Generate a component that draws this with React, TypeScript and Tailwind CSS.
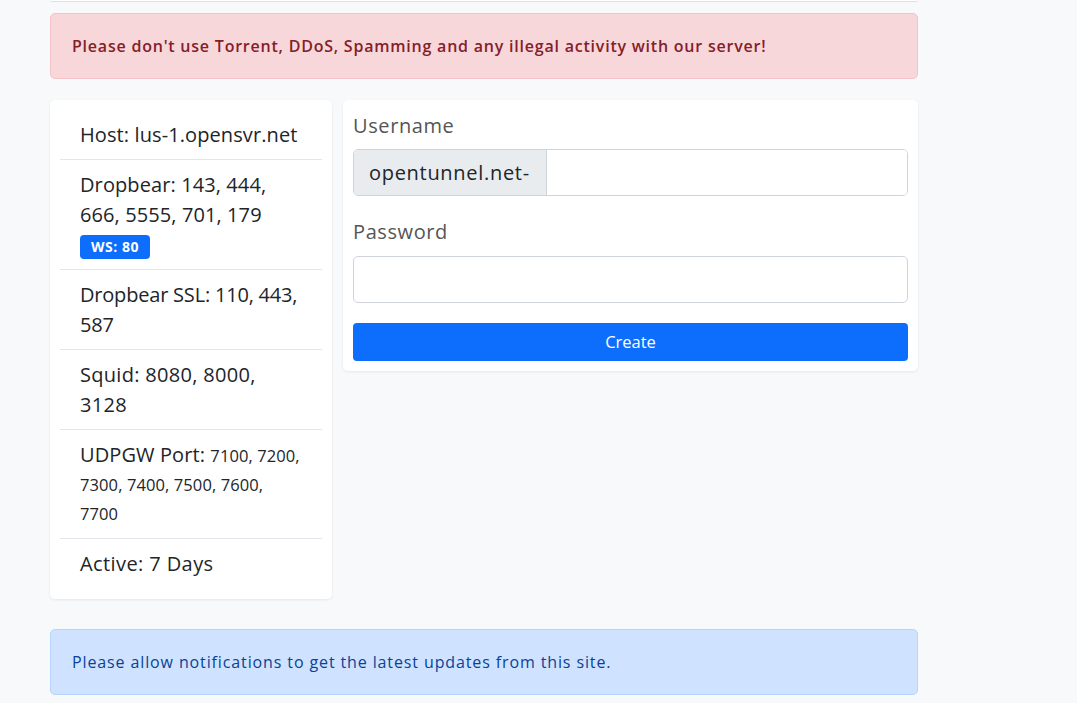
import React from "react";

const font = { fontFamily: "'Open Sans', 'Noto Sans', sans-serif" };

const li = "border-b border-[#e3e6ea] py-[10px] pl-[20px] pr-[10px] whitespace-nowrap";

export default function App() {
  return (
    <div className="min-h-[703px] w-full bg-[#f8f9fa]" style={font}>
      <div className="ml-[50px] w-[868px]">
        <div className="h-[2px] bg-white border-b border-[#dee2e6] rounded-b-[4px]" />
        <div className="mt-[11px] rounded-[5px] border border-[#f5c2c7] bg-[#f8d7da] px-[21px] py-[20px] text-[16px] font-semibold leading-[24px] tracking-[0.78px] text-[#842029]">
          Please don't use Torrent, DDoS, Spamming and any illegal activity with our server!
        </div>
        <div className="mt-[21px] flex items-start gap-[11px]">
          <div className="w-[282px] rounded-[5px] bg-white p-[10px] shadow-[0_1px_3px_rgba(0,0,0,0.08)]">
            <ul className="text-[20px] leading-[29.5px] tracking-[0.1px] text-[#212529]">
              <li className={li + " leading-[29px]"}>Host: lus-1.opensvr.net</li>
              <li className={li}>
                Dropbear: 143, 444,
                <br />
                666, 5555, 701, 179
                <div className="mt-[6px] flex">
                  <span className="inline-flex h-[24px] items-center rounded-[4px] bg-[#0d6efd] px-[11px] text-[14px] font-bold tracking-[0.5px] text-white">WS: 80</span>
                </div>
              </li>
              <li className={li + " tracking-[-0.2px]"}>
                Dropbear SSL: 110, 443,
                <br />
                587
              </li>
              <li className={li + " tracking-[0.3px]"}>
                Squid: 8080, 8000,
                <br />
                3128
              </li>
              <li className={li + " h-[109px] overflow-hidden"}>
                <div className="h-[29.5px]">
                  UDPGW Port: <span className="text-[16.5px]">7100, 7200,</span>
                </div>
                <div className="h-[29.5px] text-[16.5px]">7300, 7400, 7500, 7600,</div>
                <div className="h-[29.5px] text-[16.5px]">7700</div>
              </li>
              <li className="py-[10px] pl-[20px] pr-[10px] leading-[30px] tracking-[0.4px]">Active: 7 Days</li>
            </ul>
          </div>
          <div className="flex-1 rounded-[5px] bg-white px-[10px] pb-[10px] pt-[11px] shadow-[0_1px_3px_rgba(0,0,0,0.08)]">
            <label className="block text-[20px] leading-[29px] tracking-[0.6px] text-[#555]">Username</label>
            <div className="mt-[9px] flex h-[47px] rounded-[5px] border border-[#ced4da]">
              <div className="flex w-[193px] items-center rounded-l-[4px] border-r border-[#ced4da] bg-[#e9ecef] px-[15px] text-[20px] tracking-[0.7px] text-[#212529]">opentunnel.net-</div>
              <input className="min-w-0 flex-1 rounded-r-[4px] bg-white px-3 outline-none" />
            </div>
            <label className="mt-[21px] block text-[20px] leading-[29px] tracking-[0.6px] text-[#555]">Password</label>
            <input type="password" className="mt-[10px] block h-[47px] w-full rounded-[5px] border border-[#ced4da] bg-white px-3 outline-none" />
            <button className="mt-[20px] block h-[38px] w-full rounded-[4px] bg-[#0d6efd] text-[16.5px] text-white">Create</button>
          </div>
        </div>
        <div className="mt-[30px] rounded-[5px] border border-[#b6d4fe] bg-[#cfe2ff] px-[21px] py-[20px] text-[16px] leading-[24px] tracking-[0.88px] text-[#084298]">
          Please allow notifications to get the latest updates from this site.
        </div>
      </div>
    </div>
  );
}
